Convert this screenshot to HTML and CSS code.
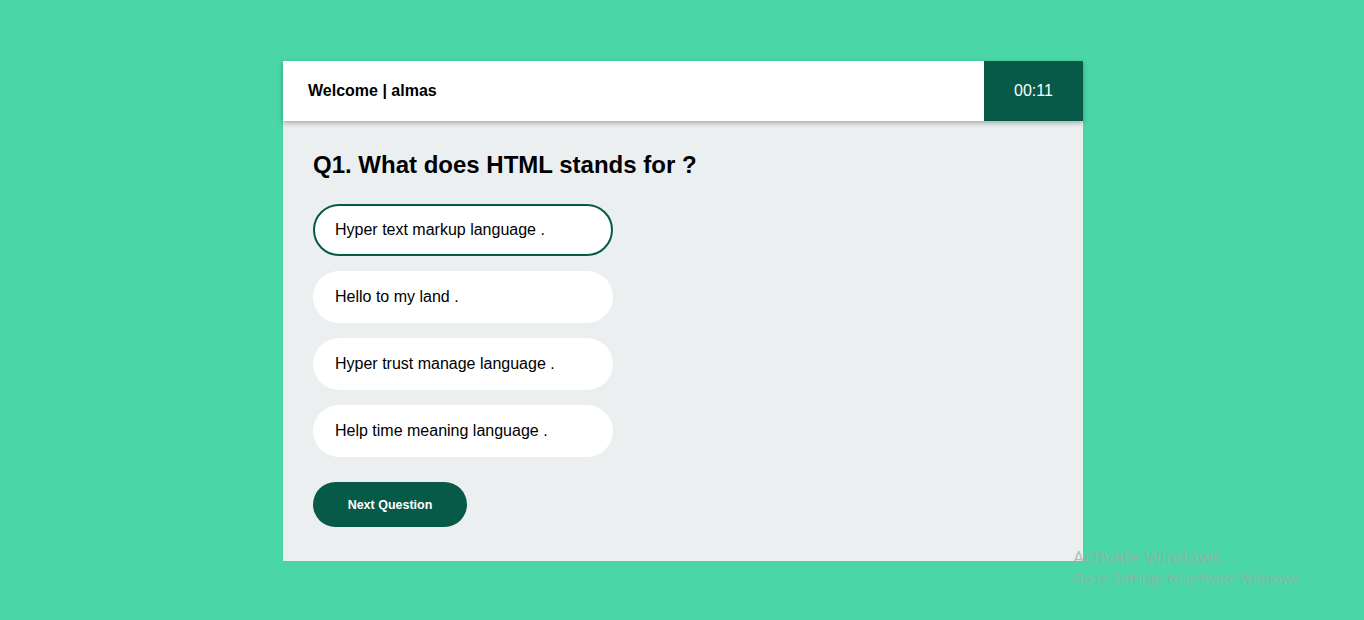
FILE: index.html
```html
<!DOCTYPE html>
<html>
<head>
<meta charset="utf-8">
<link rel="stylesheet" href="styles.css">
</head>
<body>
<div class="card">
  <header class="bar">
    <div class="welcome">Welcome | almas</div>
    <div class="timer">00:11</div>
  </header>
  <main class="body">
    <h2 class="question">Q1. What does HTML stands for ?</h2>
    <ul class="options">
      <li class="option selected">Hyper text markup language .</li>
      <li class="option">Hello to my land .</li>
      <li class="option">Hyper trust manage language .</li>
      <li class="option">Help time meaning language .</li>
    </ul>
    <button class="next">Next Question</button>
  </main>
</div>
<div class="watermark">
  <div class="wm-title">Activate Windows</div>
  <div class="wm-sub">Go to Settings to activate Windows.</div>
</div>
</body>
</html>
```
FILE: styles.css
```css
* { box-sizing: border-box; }
html, body { margin: 0; padding: 0; }
body {
  background: #4ad6a7;
  font-family: "Liberation Sans", Arial, sans-serif;
  height: 620px;
  overflow: hidden;
  padding-top: 61px;
}
.card {
  width: 800px;
  margin-left: 283px;
  background: #ebeff0;
  height: 500px;
}
.bar {
  display: flex;
  height: 60px;
  background: #fff;
  box-shadow: 0 2px 5px rgba(0,0,0,0.3);
  position: relative;
}
.welcome {
  flex: 1;
  display: flex;
  align-items: center;
  padding-left: 25px;
  font-size: 16px;
  font-weight: bold;
  color: #000;
}
.timer {
  width: 99px;
  background: #075948;
  color: #fff;
  font-size: 16px;
  display: flex;
  align-items: center;
  justify-content: center;
}
.body {
  padding: 31px 30px 0;
}
.question {
  margin: 0;
  font-size: 24px;
  line-height: 26px;
  font-weight: bold;
  color: #000;
}
.options {
  list-style: none;
  margin: 26px 0 0;
  padding: 0;
  display: flex;
  flex-direction: column;
  gap: 15px;
}
.option {
  width: 300px;
  height: 52px;
  background: #fff;
  border: 2px solid transparent;
  border-radius: 26px;
  padding: 0 20px;
  display: flex;
  align-items: center;
  font-size: 16px;
  color: #000;
}
.option.selected {
  border-color: #075948;
}
.next {
  margin-top: 25px;
  width: 154px;
  height: 45px;
  border: none;
  border-radius: 23px;
  background: #075948;
  color: #fff;
  font-family: "Liberation Sans", Arial, sans-serif;
  font-size: 12.5px;
  font-weight: bold;
}
.watermark {
  position: absolute;
  left: 1073px;
  top: 546px;
  color: rgba(160,170,165,0.75);
  font-family: "Open Sans", "DejaVu Sans", sans-serif;
}
.wm-title { font-size: 18px; line-height: 22px; }
.wm-sub { font-size: 14px; line-height: 21px; }
```
